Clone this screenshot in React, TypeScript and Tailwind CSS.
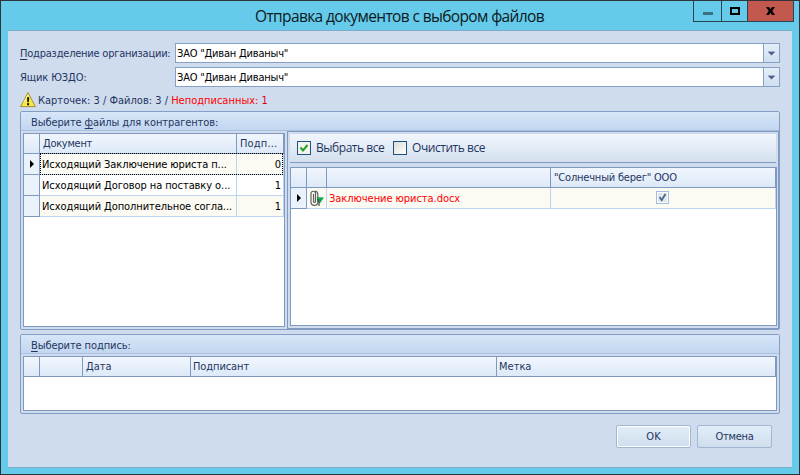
import type { ReactNode } from 'react';

const gridHead = 'bg-linear-to-b from-[#f1f6fd] to-[#dde9f8] border-[#8099bf]';

function Combo({ value }: { value: string }) {
  return (
    <div className="flex h-5 w-[605px] border border-[#86a0c6] bg-white text-black">
      <div className="flex-1 pl-px leading-[20px] tracking-[-0.2px]">{value}</div>
      <div className="flex w-4 items-center justify-center border-l border-[#86a0c6] bg-linear-to-b from-[#e3eefa] to-[#d0dfee]">
        <svg width="7" height="5" viewBox="0 0 7 5"><path d="M0 1h7L3.5 4.5z" fill="#4c5f87" /><path d="M0 .5h7" stroke="#a3b1c9" /></svg>
      </div>
    </div>
  );
}

function Group({ title, className, children }: { title: ReactNode; className: string; children: ReactNode }) {
  return (
    <section className={`ml-3 w-[760px] rounded-[2px] border border-[#839dc4] ${className}`}>
      <div className="h-[19px] border-b border-[#a9c1df] bg-linear-to-b from-[#d7e6f8] to-[#c2d6f0] pl-[10px] leading-[21px] tracking-[-0.1px]">{title}</div>
      {children}
    </section>
  );
}

function Pointer() {
  return <svg width="4" height="8" viewBox="0 0 4 8"><path d="M0 0l4 4-4 4z" fill="#000" /></svg>;
}

function DocRow({ name, count, active, alt }: { name: string; count: number; active?: boolean; alt?: boolean }) {
  return (
    <div className="flex h-[21px] text-black">
      <div className="flex w-4 items-center justify-center border-r border-b border-[#8099bf] bg-[#eaf2fc]">{active && <Pointer />}</div>
      <div className={`relative flex flex-1 border-b border-[#bdd4f0] ${alt ? 'bg-[#fbfaf3]' : 'bg-white'}`}>
        <div className="w-[197px] border-r border-[#bdd4f0] pl-[2px] leading-[21px] whitespace-nowrap tracking-[-0.08px]">{name}</div>
        <div className="flex-1 pr-[2px] text-right leading-[21px]">{count}</div>
        {active && <div className="absolute -inset-y-px inset-x-0 border border-dotted border-black" />}
      </div>
      <div className="w-px bg-[#bdd4f0]" />
    </div>
  );
}

function Warning() {
  return (
    <svg width="16" height="16" viewBox="0 0 16 16">
      <path d="M8 .6L15.4 14.6H.6z" fill="#f8e93c" stroke="#a98a3c" strokeLinejoin="round" />
      <path d="M8 2.6L3.5 11" stroke="#fffbc0" strokeWidth=".8" />
      <path d="M7 5.2h2.2l-.4 5H7.4z" fill="#111" /><rect x="7.1" y="11.2" width="2" height="2" fill="#111" />
    </svg>
  );
}

function Clip() {
  return (
    <svg width="16" height="17" viewBox="0 0 16 17" fill="none">
      <path d="M4.5 4v7.5a1 1 0 002 0V3.5a2 2 0 00-4.5 0V12a3.4 3.4 0 006.8 0V4.5A3.3 3.3 0 006 1.2" stroke="#606060" strokeWidth="1.2" />
      <path d="M7.5 7l7.5.5-4.2 6z" fill="#14a850" />
      <path d="M8.5 9l1.5 3v4" stroke="#222" />
    </svg>
  );
}

export default function App() {
  return (
    <div className="flex h-[475px] w-[800px] flex-col overflow-hidden border border-[#30343a] bg-[#66caea] pl-[7px] font-['DejaVu_Sans_Condensed','DejaVu_Sans',sans-serif] text-[11px] text-[#1f3561]">
      <header className="flex h-[29px] shrink-0">
        <div className="w-[685px] pl-[247px] font-['Open_Sans',sans-serif] text-[15.5px] leading-[30px] tracking-[-0.63px] whitespace-nowrap text-[#0b1a22]">Отправка документов с выбором файлов</div>
        <div className="flex h-[21px] w-[101px] border border-t-0 border-[#254653] text-black">
          <div className="flex w-[28px] justify-center border-r border-[#254653] pt-[11px]"><div className="h-[3px] w-[10px] bg-[#396f82]" /></div>
          <div className="flex w-[26px] justify-center border-r border-[#254653] pt-[6px]"><div className="h-2 w-[10px] border-2 border-black" /></div>
          <div className="flex flex-1 items-center justify-center bg-[#c3584f]">
            <svg width="9" height="8" viewBox="0 0 9 8"><path d="M0 0h3l1.5 2.2L6 0h3L6.3 4 9 8H6L4.5 5.8 3 8H0l2.7-4z" fill="#000" /></svg>
          </div>
        </div>
      </header>

      <main className="flex h-[438px] w-[784px] flex-col border-t border-b border-[#7fabc8] bg-[#cfdcee]">
        <div className="mt-3 flex h-5">
          <div className="w-[167px] pl-3 leading-[22px] tracking-[-0.22px] whitespace-nowrap"><u className="underline-offset-2">П</u>одразделение организации:</div>
          <Combo value={'ЗАО "Диван Диваныч"'} />
        </div>
        <div className="mt-1 flex h-5">
          <div className="w-[167px] pl-3 leading-[22px] tracking-[-0.1px]">Ящик ЮЗДО:</div>
          <Combo value={'ЗАО "Диван Диваныч"'} />
        </div>
        <div className="mt-[5px] ml-3 flex h-4 gap-[2px]">
          <Warning />
          <span className="leading-[18px] whitespace-nowrap">Карточек: 3 / Файлов: 3 / <span className="text-[#ff0000]">Неподписанных: </span><span className="text-[#e00018]">1</span></span>
        </div>

        <Group className="mt-[3px] h-[219px]" title={<>Выберите <u className="underline-offset-2">ф</u>айлы для контрагентов:</>}>
          <div className="flex h-[198px] pl-[2px]">
            <div className="mt-[2px] h-[194px] w-[262px] border border-[#8099bf] bg-white">
              <div className={`flex h-5 border-b ${gridHead}`}>
                <div className="w-4 border-r border-[#8099bf]" />
                <div className="w-[197px] border-r border-[#8099bf] pl-[3px] leading-[19px] tracking-[-0.3px]">Документ</div>
                <div className="flex-1 border-r border-[#8099bf] pl-[3px] leading-[19px] tracking-[0.15px]">Подп...</div>
              </div>
              <DocRow name="Исходящий Заключение юриста п..." count={0} active alt />
              <DocRow name="Исходящий Договор на поставку о..." count={1} />
              <DocRow name="Исходящий Дополнительное согла..." count={1} alt />
            </div>
            <div className="ml-[2px] h-[198px] w-[492px] border border-[#8099bf] p-[2px]">
              <div className="flex h-[29px] w-[486px] items-center border-b border-[#8099bf] bg-linear-to-b from-[#f1f6fd] to-[#d4e0ee] pl-[7px] font-['Open_Sans',sans-serif] text-[12px] tracking-[-0.45px]">
                <div className="flex size-[14px] items-center justify-center border border-[#1c5180] bg-[#f4f4ef]">
                  <svg width="10" height="10" viewBox="0 0 10 10"><path d="M1.5 4.5l2.5 3L8.5 2" fill="none" stroke="#21a121" strokeWidth="2" /></svg>
                </div>
                <span className="ml-[5px] w-[77px] whitespace-nowrap">Выбрать все</span>
                <div className="size-[14px] border border-[#1c5180] bg-linear-to-br from-[#dcdcd7] to-white" />
                <span className="ml-[5px] whitespace-nowrap">Очистить все</span>
              </div>
              <div className="mt-1 h-[159px] w-[487px] border border-[#8099bf] bg-white">
                <div className={`flex h-5 border-b ${gridHead}`}>
                  <div className="w-4 border-r border-[#8099bf]" />
                  <div className="w-5 border-r border-[#8099bf]" />
                  <div className="w-[224px] border-r border-[#8099bf]" />
                  <div className="flex-1 border-r border-[#8099bf] pl-[3px] leading-[19px] tracking-[-0.2px]">"Солнечный берег" ООО</div>
                </div>
                <div className="flex h-[21px] bg-[#fbfaf3]">
                  <div className="flex w-4 items-center justify-center border-r border-b border-[#8099bf] bg-[#eaf2fc]"><Pointer /></div>
                  <div className="flex w-5 items-center justify-center border-r border-b border-[#bdd4f0]"><Clip /></div>
                  <div className="w-[224px] border-r border-b border-[#bdd4f0] pl-[2px] leading-[21px] tracking-[-0.05px] text-[#ff0000]">Заключение юриста.docx</div>
                  <div className="flex flex-1 items-center justify-center border-r border-b border-[#bdd4f0]">
                    <div className="mr-px mb-px size-[13px] border border-[#a4bbdf] bg-white p-px">
                      <svg className="block bg-[#e3e6ea]" width="9" height="9" viewBox="0 0 9 9"><path d="M1.5 4l2.2 3.2L7.5 1" fill="none" stroke="#47668f" strokeWidth="1.8" /></svg>
                    </div>
                  </div>
                </div>
              </div>
            </div>
          </div>
        </Group>

        <Group className="mt-1 h-[80px]" title={<><u className="underline-offset-2">В</u>ыберите подпись:</>}>
          <div className="mt-[2px] ml-[2px] h-[55px] w-[754px] border border-[#8099bf] bg-white">
            <div className={`flex h-5 border-b ${gridHead}`}>
              <div className="w-4 border-r border-[#8099bf]" />
              <div className="w-[43px] border-r border-[#8099bf]" />
              <div className="w-[108px] border-r border-[#8099bf] pl-[3px] leading-[19px]">Дата</div>
              <div className="w-[306px] border-r border-[#8099bf] pl-[2px] leading-[19px] tracking-[-0.1px]">Подписант</div>
              <div className="flex-1 border-r border-[#8099bf] pl-[2px] leading-[19px]">Метка</div>
            </div>
          </div>
        </Group>

        <div className="mt-[11px] ml-[608px] flex gap-[6px] leading-[20px]">
          <button className="h-[23px] w-[75px] rounded-[2px] border border-[#a4b5d1] bg-linear-to-b from-[#e1edf9] to-[#cfdeec] shadow-[inset_0_0_0_1px_#fff]">OK</button>
          <button className="h-[23px] w-[75px] rounded-[2px] border border-[#a4b5d1] bg-linear-to-b from-[#e1edf9] to-[#cfdeec] tracking-[-0.3px]">Отмена</button>
        </div>
      </main>
    </div>
  );
}
